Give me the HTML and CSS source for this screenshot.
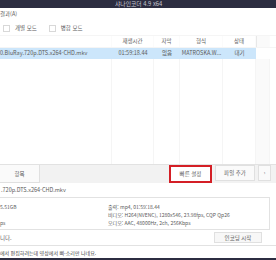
FILE: index.html
```html
<!DOCTYPE html>
<html lang="ko">
<head>
  <meta charset="UTF-8">
  <title>샤나인코더 4.9 x64</title>
  <link rel="stylesheet" href="styles.css">
</head>
<body>
<div class="window">
  <div class="titlebar"><span class="title">샤나인코더 4.9 x64</span></div>

  <div class="menu">결과(A)</div>

  <div class="modes">
    <label class="mode"><span class="box"></span>개별 모드</label>
    <label class="mode"><span class="box"></span>병합 모드</label>
  </div>

  <div class="list">
    <div class="row head">
      <span class="c-name"></span>
      <span class="c-time">재생시간</span>
      <span class="c-sub">자막</span>
      <span class="c-fmt">형식</span>
      <span class="c-state">상태</span>
      <span class="c-end"></span>
    </div>
    <div class="row selected">
      <span class="c-name">0.BluRay.720p.DTS.x264-CHD.mkv</span>
      <span class="c-time">01:59:18.44</span>
      <span class="c-sub">없음</span>
      <span class="c-fmt">MATROSKA.W...</span>
      <span class="c-state">대기</span>
      <span class="c-end"></span>
    </div>
    <div class="row empty">
      <span class="c-name"></span>
      <span class="c-time"></span>
      <span class="c-sub"></span>
      <span class="c-fmt"></span>
      <span class="c-state"></span>
      <span class="c-end"></span>
    </div>
  </div>

  <div class="toolbar">
    <button class="btn items">항목</button>
    <span class="spacer"></span>
    <button class="btn quick">빠른 설정</button>
    <button class="btn add">파일 추가</button>
    <button class="btn more">›</button>
  </div>

  <div class="filename">.720p.DTS.x264-CHD.mkv</div>

  <div class="info">
    <div class="info-left">
      <div>5.51GB</div>
      <div>&nbsp;</div>
      <div>ps</div>
    </div>
    <div class="info-right">
      <div>출력: mp4, 01:59:18.44</div>
      <div>비디오: H264(NVENC), 1280x546, 23.98fps, CQP Qp26</div>
      <div>오디오: AAC, 48000Hz, 2ch, 256Kbps</div>
    </div>
  </div>

  <div class="status">
    <span>니다.</span>
    <button class="btn start">인코딩 시작</button>
  </div>

  <div class="caption">에서 편집하려는데 영상에서 삐-소리만 나네요.</div>

  <div class="taskbar"></div>
</div>
</body>
</html>
```

FILE: styles.css
```css
html {
  --navy: #2c2d41;
  --text: #5a5a5a;
  --line: #e2e2e2;
  --faint: #f5f5f5;
  --select: #cce6fb;
  --red: #d41f26;
  --font: "Noto Sans CJK KR", "Noto Sans", sans-serif;
}

body {
  margin: 0;
  background: #fff;
  font-family: var(--font);
  color: var(--text);
  font-size: 5.5px;
}

.window {
  width: 276px;
  height: 260px;
  overflow: hidden;
  display: flex;
  flex-direction: column;
}

.titlebar {
  height: 8px;
  flex: none;
  background: var(--navy);
  color: #c8c8d2;
  font-size: 5.8px;
  line-height: 8px;
  padding-left: 115px;
}

.menu {
  height: 12px;
  flex: none;
  line-height: 11px;
  padding-top: 1px;
}

.modes {
  height: 14px;
  flex: none;
  display: flex;
  align-items: center;
  gap: 12px;
  padding-left: 3px;
  border-bottom: 1px solid var(--faint);
}

.mode {
  display: flex;
  align-items: center;
  gap: 5px;
}

.box {
  width: 5px;
  height: 5px;
  border: 1px solid #d8d8d8;
  background: #fff;
}

.list {
  flex: none;
  height: 128px;
  display: flex;
  flex-direction: column;
}

.row {
  display: grid;
  grid-template-columns: 112px 42px 26px 43px 33px 14px;
  align-items: center;
}

.row > span {
  text-align: center;
  white-space: nowrap;
  overflow: hidden;
}

.row .c-name {
  text-align: left;
}

.head {
  height: 11px;
  border-bottom: 1px solid var(--faint);
}

.head > span,
.empty > span {
  height: 100%;
  line-height: 11px;
  border-right: 1px solid var(--faint);
}

.head > span {
  border-right-color: #fbfbfb;
}

.head .c-end {
  border-left: 1px solid #e8e8e8;
}

.selected {
  height: 11px;
  background: var(--select);
  width: 256px;
}

.selected > span {
  line-height: 11px;
}

.empty {
  flex: 1;
  align-items: stretch;
}

.empty .c-end,
.head .c-end {
  background: #fafafa;
}

.toolbar {
  height: 18px;
  flex: none;
  display: flex;
  align-items: stretch;
  gap: 3px;
  background: #f2f2f2;
  border-top: 1px solid var(--line);
  padding-right: 5px;
}

.btn {
  font-family: var(--font);
  font-size: 5.5px;
  color: var(--text);
  background: #fafafa;
  border: 1px solid #e0e0e0;
  padding: 0;
  margin: 0;
}

.items {
  width: 40px;
  border-left: none;
  border-top: none;
}

.spacer {
  flex: 1;
}

.quick {
  width: 43px;
  border: 2px solid var(--red);
  background: #fff;
}

.add {
  width: 40px;
  margin-bottom: 2px;
}

.more {
  width: 13px;
  margin-bottom: 2px;
}

.filename {
  height: 14px;
  flex: none;
  line-height: 14px;
  padding-left: 1px;
}

.info {
  height: 33px;
  flex: none;
  display: flex;
  border-top: 1px solid var(--line);
  border-bottom: 1px solid var(--line);
  border-right: 1px solid var(--line);
  margin-right: 6px;
  font-size: 5px;
  line-height: 8px;
  padding-top: 5px;
  box-sizing: border-box;
}

.info-left {
  width: 108px;
}

.status {
  height: 15px;
  flex: none;
  display: flex;
  align-items: center;
  justify-content: space-between;
  padding-right: 14px;
  border-bottom: 1px solid var(--line);
}

.start {
  width: 48px;
  height: 11px;
  background: #f7f7f7;
}

.caption {
  height: 12px;
  flex: none;
  line-height: 13px;
  font-size: 5px;
  color: #444;
}

.taskbar {
  flex: 1;
  background: var(--navy);
}
```
